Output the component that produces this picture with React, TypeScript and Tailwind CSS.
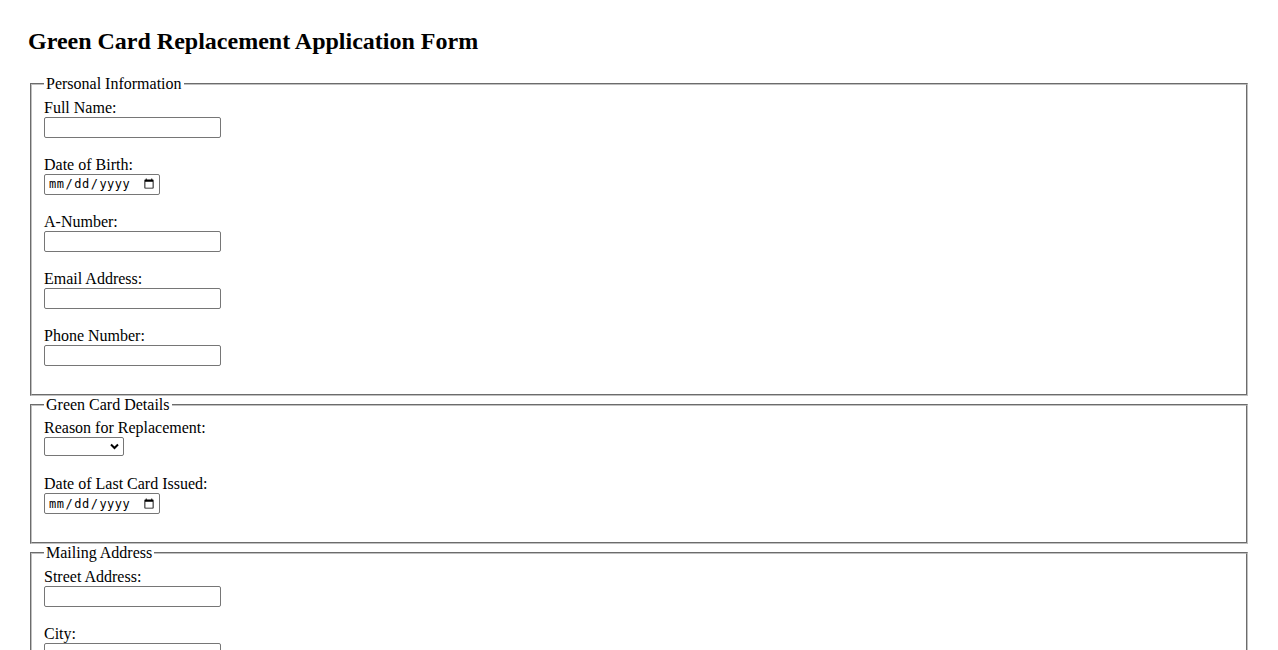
import { ChangeEvent, useState } from 'react'

const serif = "font-['Liberation_Serif','Times_New_Roman',serif]"

const Field = ({ label, id, type = 'text' }: { label: string, id: string, type?: string }) => (
    <div className="mb-[18px]">
        <label htmlFor={id} className="block h-[18px] leading-[18px]">{label}</label>
        {type === 'date' ? (
            <input
                id={id}
                type="date"
                className="block h-[21px] w-[116px] rounded-[2px] border border-[#767676] bg-white pl-[3px] pr-[2px] text-[12px] tracking-[0.5px] font-['DejaVu_Sans_Mono',monospace] text-black"
            />
        ) : (
            <input
                id={id}
                type={type}
                className="block h-[21px] w-[177px] rounded-[2px] border border-[#767676] bg-white px-[2px] text-[13.33px] font-['Liberation_Sans',sans-serif]"
            />
        )}
    </div>
)

const Section = ({ legend, children }: { legend: string, children: React.ReactNode }) => (
    <fieldset className="mx-[2px] border-2 [border-style:groove] border-[#c0c0c0] px-[12px] pt-[5.6px] pb-[10px]">
        <legend className="px-[2px] leading-[18px]">{legend}</legend>
        {children}
    </fieldset>
)

export default function App() {
    const [reason, setReason] = useState('')

    return (
        <div className={`min-h-screen bg-white px-[28px] pt-[27px] pb-[28px] text-[16px] text-black ${serif}`}>
            <h2 className="mb-[20px] text-[24px] font-bold leading-[28px]">Green Card Replacement Application Form</h2>

            <form onSubmit={(e) => e.preventDefault()}>
                <Section legend="Personal Information">
                    <Field label="Full Name:" id="fullName" />
                    <Field label="Date of Birth:" id="dob" type="date" />
                    <Field label="A-Number:" id="aNumber" />
                    <Field label="Email Address:" id="email" type="email" />
                    <Field label="Phone Number:" id="phone" type="tel" />
                </Section>

                <Section legend="Green Card Details">
                    <div className="mb-[18px]">
                        <label htmlFor="reason" className="block h-[18px] leading-[18px]">Reason for Replacement:</label>
                        <div className="relative h-[20px] w-[80px]">
                            <select
                                id="reason"
                                value={reason}
                                onChange={(e: ChangeEvent<HTMLSelectElement>) => setReason(e.target.value)}
                                className="block h-[19px] w-[80px] appearance-none rounded-[2px] border border-[#767676] bg-white px-[2px] text-[13.33px] font-['Liberation_Sans',sans-serif]"
                            >
                                <option value=""></option>
                                <option value="lost">Lost</option>
                                <option value="stolen">Stolen</option>
                                <option value="damaged">Damaged</option>
                                <option value="expired">Expired</option>
                            </select>
                            {/* chevron */}
                            <svg className="pointer-events-none absolute right-[5px] top-[6px]" width="9" height="7" viewBox="0 0 9 7">
                                <path d="M1 1.5 L4.5 5 L8 1.5" fill="none" stroke="#000" strokeWidth="2" />
                            </svg>
                        </div>
                    </div>
                    <Field label="Date of Last Card Issued:" id="lastIssued" type="date" />
                </Section>

                <Section legend="Mailing Address">
                    <Field label="Street Address:" id="street" />
                    <Field label="City:" id="city" />
                    <Field label="State:" id="state" />
                    <Field label="ZIP Code:" id="zip" />
                </Section>

                <button type="submit" className="mt-[16px] rounded-[2px] border border-[#767676] bg-[#efefef] px-[6px] py-[1px] text-[13.33px] font-['Liberation_Sans',sans-serif]">
                    Submit Application
                </button>
            </form>
        </div>
    )
}
